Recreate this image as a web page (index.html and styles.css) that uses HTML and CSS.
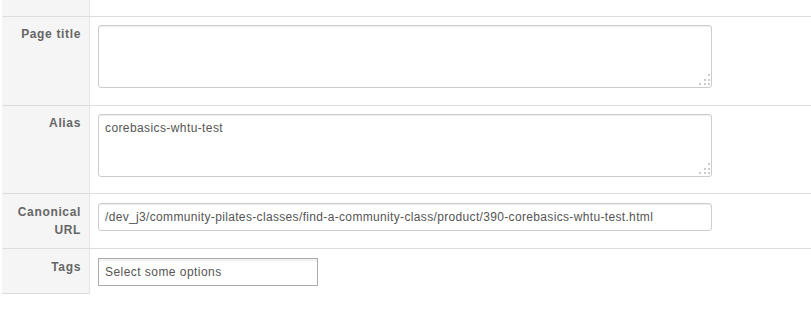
FILE: index.html
```html
<!DOCTYPE html>
<html lang="en">
<head>
    <meta charset="UTF-8">
    <title>Metadata</title>
    <link rel="stylesheet" href="styles.css">
</head>
<body>
    <div class="form-table">
        <div class="row row-top">
            <div class="label"></div>
            <div class="field"></div>
        </div>

        <div class="row row-area">
            <div class="label">Page title</div>
            <div class="field">
                <div class="area-wrap">
                    <textarea class="area"></textarea>
                    <svg class="grip" width="12" height="12" viewBox="0 0 12 12">
                        <rect x="9" y="0" width="2" height="2"/>
                        <rect x="5" y="5" width="2" height="2"/>
                        <rect x="9" y="5" width="2" height="2"/>
                        <rect x="0" y="9" width="2" height="2"/>
                        <rect x="5" y="9" width="2" height="2"/>
                        <rect x="9" y="9" width="2" height="2"/>
                    </svg>
                </div>
            </div>
        </div>

        <div class="row row-area row-alias">
            <div class="label">Alias</div>
            <div class="field">
                <div class="area-wrap">
                    <textarea class="area">corebasics-whtu-test</textarea>
                    <svg class="grip" width="12" height="12" viewBox="0 0 12 12">
                        <rect x="9" y="0" width="2" height="2"/>
                        <rect x="5" y="5" width="2" height="2"/>
                        <rect x="9" y="5" width="2" height="2"/>
                        <rect x="0" y="9" width="2" height="2"/>
                        <rect x="5" y="9" width="2" height="2"/>
                        <rect x="9" y="9" width="2" height="2"/>
                    </svg>
                </div>
            </div>
        </div>

        <div class="row row-url">
            <div class="label">Canonical URL</div>
            <div class="field">
                <input class="text-input" type="text" value="/dev_j3/community-pilates-classes/find-a-community-class/product/390-corebasics-whtu-test.html">
            </div>
        </div>

        <div class="row row-tags">
            <div class="label">Tags</div>
            <div class="field">
                <div class="chosen">Select some options</div>
            </div>
        </div>
    </div>
</body>
</html>
```

FILE: styles.css
```css
body {
    margin: 0;
    padding: 0;
    background: #fff;
    font-family: "Liberation Sans", Arial, sans-serif;
    font-size: 12px;
    color: #555;
}
.form-table {
    margin-left: 2px;
}
.row {
    display: flex;
    border-top: 1px solid #dddddd;
}
.row-top {
    border-top: none;
    height: 16px;
}
.label {
    flex-shrink: 0;
    width: 79px;
    padding: 8px 8px 0 0;
    background: #f5f5f5;
    border-right: 1px solid #e5e5e5;
    text-align: right;
    font-weight: bold;
    letter-spacing: 0.65px;
    line-height: 18px;
    color: #666;
}
.field {
    flex: 1;
    padding: 8px 0 17px 8px;
}
.row-alias .field {
    padding-bottom: 16px;
}
.area-wrap {
    position: relative;
    width: 614px;
    height: 63px;
}
.area {
    display: block;
    box-sizing: border-box;
    width: 614px;
    height: 63px;
    margin: 0;
    padding: 4px 6px;
    border: 1px solid #cccccc;
    border-radius: 3px;
    box-shadow: inset 0 1px 1px rgba(0, 0, 0, 0.075);
    font-family: "Liberation Sans", Arial, sans-serif;
    font-size: 12px;
    letter-spacing: 0.4px;
    line-height: 18px;
    color: #555;
    resize: none;
    outline: none;
}
.grip {
    position: absolute;
    right: 1px;
    bottom: 2px;
    fill: #cccccc;
}
.row-url .label,
.row-url .field {
    padding-top: 9px;
}
.text-input {
    display: block;
    box-sizing: border-box;
    width: 614px;
    height: 28px;
    margin: 0;
    padding: 4px 6px;
    border: 1px solid #cccccc;
    border-radius: 3px;
    box-shadow: inset 0 1px 1px rgba(0, 0, 0, 0.075);
    font-family: "Liberation Sans", Arial, sans-serif;
    font-size: 12px;
    letter-spacing: 0.34px;
    color: #555;
    outline: none;
}
.row-tags .label {
    padding-top: 9px;
    border-bottom: 1px solid #dddddd;
    height: 35px;
}
.row-tags .field {
    padding: 9px 0 0 8px;
}
.chosen {
    box-sizing: border-box;
    width: 220px;
    height: 28px;
    padding: 0 6px;
    border: 1px solid #aaaaaa;
    background: linear-gradient(#eeeeee 1%, #ffffff 15%);
    letter-spacing: 0.45px;
    line-height: 26px;
    color: #555;
}
```
